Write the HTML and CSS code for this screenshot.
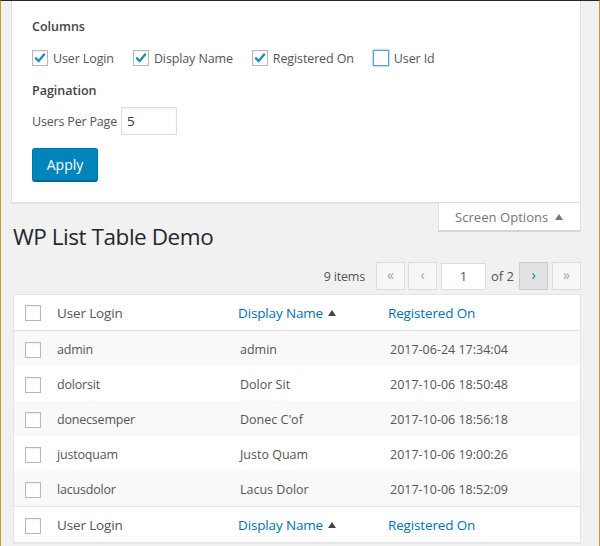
FILE: index.html
```html
<!DOCTYPE html>
<html lang="en">
<head>
<meta charset="utf-8">
<title>WP List Table Demo</title>
<link rel="stylesheet" href="styles.css">
</head>
<body>
<div class="frame">
  <section class="panel">
    <h5 class="legend">Columns</h5>
    <div class="columns">
      <label class="opt"><span class="cb checked"><svg viewBox="0 0 16 16"><path d="M2.6 7.6 L6.4 11.4 L13.4 3.2" /></svg></span>User Login</label>
      <label class="opt"><span class="cb checked"><svg viewBox="0 0 16 16"><path d="M2.6 7.6 L6.4 11.4 L13.4 3.2" /></svg></span>Display Name</label>
      <label class="opt"><span class="cb checked"><svg viewBox="0 0 16 16"><path d="M2.6 7.6 L6.4 11.4 L13.4 3.2" /></svg></span>Registered On</label>
      <label class="opt"><span class="cb focus"></span>User Id</label>
    </div>
    <h5 class="legend pag">Pagination</h5>
    <div class="perpage"><span>Users Per Page</span><span class="num">5</span></div>
    <span class="apply">Apply</span>
  </section>
  <div class="tabrow"><div class="tab">Screen Options <i class="up tab-up"></i></div></div>
  <h1 class="title">WP List Table Demo</h1>
  <div class="nav">
    <span class="count">9 items</span>
    <span class="pg dis first">«</span>
    <span class="pg dis">‹</span>
    <span class="cur">1</span>
    <span class="of">of 2</span>
    <span class="pg active">›</span>
    <span class="pg dis">»</span>
  </div>
  <div class="table">
    <div class="row head"><span class="cb"></span><span class="c1">User Login</span><span class="c2 link">Display Name <i class="up"></i></span><span class="c3 link">Registered On</span></div>
    <div class="row alt"><span class="cb"></span><span class="c1">admin</span><span class="c2 v">admin</span><span class="c3 v">2017-06-24 17:34:04</span></div>
    <div class="row"><span class="cb"></span><span class="c1">dolorsit</span><span class="c2 v">Dolor Sit</span><span class="c3 v">2017-10-06 18:50:48</span></div>
    <div class="row alt"><span class="cb"></span><span class="c1">donecsemper</span><span class="c2 v">Donec C'of</span><span class="c3 v">2017-10-06 18:56:18</span></div>
    <div class="row"><span class="cb"></span><span class="c1">justoquam</span><span class="c2 v">Justo Quam</span><span class="c3 v">2017-10-06 19:00:26</span></div>
    <div class="row alt"><span class="cb"></span><span class="c1">lacusdolor</span><span class="c2 v">Lacus Dolor</span><span class="c3 v">2017-10-06 18:52:09</span></div>
    <div class="row foot"><span class="cb"></span><span class="c1">User Login</span><span class="c2 link">Display Name <i class="up"></i></span><span class="c3 link">Registered On</span></div>
  </div>
</div>
</body>
</html>
```
FILE: styles.css
```css
* { box-sizing: border-box; }
html, body { margin: 0; padding: 0; }
body { width: 600px; height: 546px; overflow: hidden; background: #f1f1f1; font-family: "Open Sans", "Noto Sans", sans-serif; font-size: 13px; color: #555; }
.frame { height: 546px; border-top: 1px solid #23282d; border-left: 1px solid #c49a3c; border-right: 1px solid #c49a3c; padding-left: 10px; padding-right: 18px; overflow: hidden; }
.panel { height: 202px; background: #fff; border: 1px solid #e1e1e1; border-top: 0; padding: 17px 20px 0 20px; box-shadow: 0 1px 1px rgba(0,0,0,.04); }
.legend { margin: 0; font-size: 12.5px; line-height: 18px; font-weight: 600; color: #444; }
.columns { display: flex; margin-top: 12px; height: 20px; align-items: center; }
.opt { display: flex; align-items: center; margin-right: 19px; letter-spacing: -.12px; font-size: 12.5px; }
.cb { display: block; flex: none; width: 16px; height: 16px; background: #fff; border: 1px solid #b4b9be; box-shadow: inset 0 1px 2px rgba(0,0,0,.07); }
.opt .cb { margin-right: 5px; }
.cb svg { display: block; width: 14px; height: 14px; fill: none; stroke: #1e8cbe; stroke-width: 2.6; }
.cb.focus { border-color: #5b9dd9; box-shadow: 0 0 2px rgba(30,140,190,.8); }
.pag { margin-top: 14px; }
.perpage { display: flex; align-items: center; margin-top: 7px; font-size: 12.5px; letter-spacing: -.18px; }
.num { width: 56px; height: 28px; margin-left: 4px; padding-left: 5px; background: #fff; border: 1px solid #ddd; line-height: 26px; box-shadow: inset 0 1px 2px rgba(0,0,0,.07); font-size: 13.5px; color: #32373c; }
.apply { display: block; width: 66px; height: 34px; margin-top: 13px; background: #0085ba; border: 1px solid #0073aa; border-bottom: 2px solid #006799; border-radius: 3px; color: #fff; font-size: 14px; line-height: 31px; text-align: center; }
.tabrow { display: flex; justify-content: flex-end; }
.tab { width: 143px; height: 29px; background: #fff; border: 1px solid #e1e1e1; border-top: 0; border-bottom: 2px solid #d5d5d5; padding-left: 16px; line-height: 29px; color: #72777c; letter-spacing: .05px; white-space: nowrap; }
.up { display: inline-block; vertical-align: 2px; width: 0; height: 0; margin-left: 3px; border-left: 4.5px solid transparent; border-right: 4.5px solid transparent; border-bottom: 6px solid #444; }
.tab-up { border-bottom-color: #72777c; }
.title { margin: -10px 0 0 2px; font-size: 22.5px; line-height: 30px; font-weight: 400; color: #23282d; letter-spacing: -.45px; }
.nav { display: flex; justify-content: flex-end; align-items: center; height: 28px; margin-top: 10px; }
.count { margin-right: 11px; font-size: 12.5px; letter-spacing: -.2px; }
.pg { width: 29px; height: 28px; margin-right: 4px; border: 1px solid #ddd; background: #f7f7f7; text-align: center; line-height: 24px; font-size: 14px; color: #a0a5aa; }
.pg.first { margin-right: 3px; }
.pg:last-child { margin-right: 0; }
.pg.active { background: #e2e2e2; border-color: #ccc; color: #0073aa; }
.cur { width: 45px; height: 27px; margin: 0 5px 0 0; background: #fff; border: 1px solid #ddd; text-align: center; line-height: 25px; color: #555; }
.of { margin-right: 5px; }
.table { margin: 4px 0 0 2px; background: #fff; border: 1px solid #e5e5e5; box-shadow: 0 1px 1px rgba(0,0,0,.04); letter-spacing: -.2px; }
.row { display: flex; align-items: center; height: 35px; padding: 3px 0 0 11px; font-size: 12.5px; }
.alt { background: #f9f9f9; }
.head, .foot { height: 36px; font-size: 13.5px; letter-spacing: -.15px; }
.head { border-bottom: 1px solid #e1e1e1; padding-top: 0; }
.foot { border-top: 1px solid #e1e1e1; padding-top: 2px; }
.c1 { width: 183px; margin-left: 16px; flex: none; margin-bottom: 2px; }
.c2 { width: 150px; flex: none; margin-bottom: 2px; }
.c3 { margin-bottom: 2px; }
.head .c1, .head .c2, .head .c3 { margin-bottom: 0; }
.link { color: #0073aa; }
.c2.link { margin-left: -2px; }
.v { letter-spacing: 0; }
.link .up { margin-left: 2px; }
```
